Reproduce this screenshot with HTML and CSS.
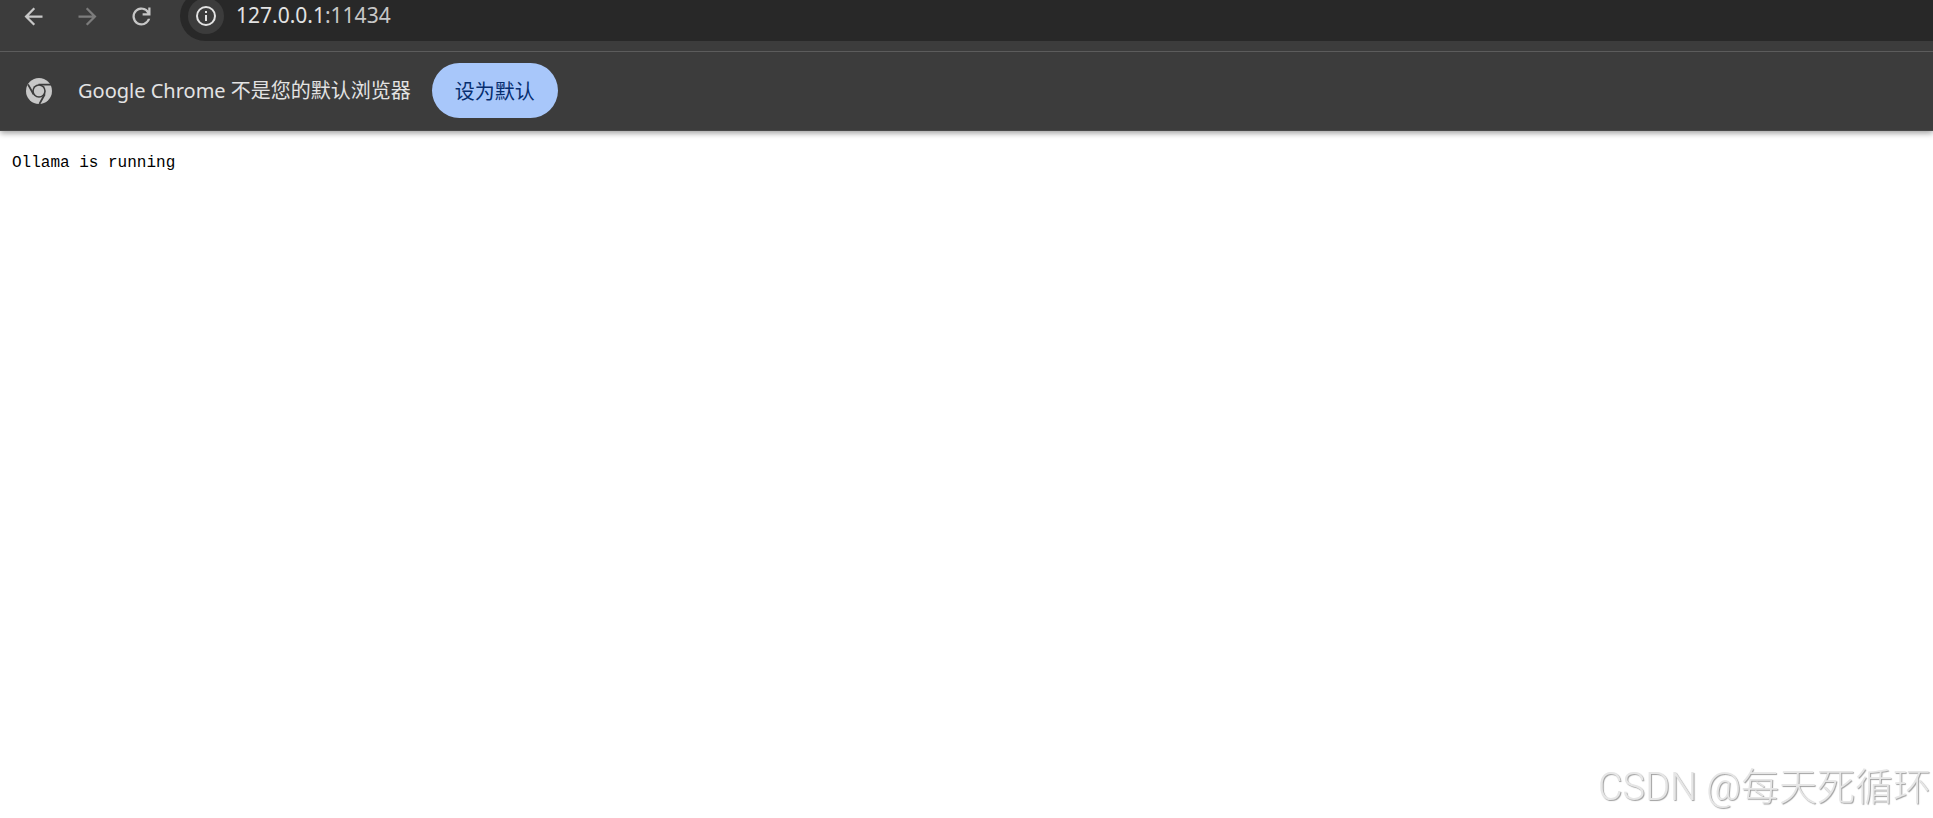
FILE: index.html
```html
<!DOCTYPE html>
<html lang="zh-CN">
<head>
<meta charset="utf-8">
<title>127.0.0.1:11434</title>
<link rel="stylesheet" href="styles.css">
</head>
<body>
<header class="browser">
  <nav class="toolbar" aria-label="导航">
    <button class="tool" type="button" aria-label="后退">
      <svg viewBox="0 0 24 24"><path d="M20 11H7.83l5.59-5.59L12 4l-8 8 8 8 1.41-1.41L7.83 13H20z"/></svg>
    </button>
    <button class="tool tool-off" type="button" aria-label="前进" disabled>
      <svg viewBox="0 0 24 24"><path d="M4 11h12.17l-5.59-5.59L12 4l8 8-8 8-1.41-1.41L16.17 13H4z"/></svg>
    </button>
    <button class="tool" type="button" aria-label="重新加载">
      <svg viewBox="0 0 24 24"><path d="M12 20a8 8 0 1 1 6-13.25V4h2v7h-7V9h4.2A6 6 0 1 0 17.65 14h2.1A8 8 0 0 1 12 20z"/></svg>
    </button>
    <div class="address">
      <button class="site-info" type="button" aria-label="网站信息">
        <svg viewBox="0 0 24 24"><path d="M11 7h2v2h-2zm0 4h2v6h-2zm1-9a10 10 0 1 0 0 20 10 10 0 0 0 0-20zm0 18a8 8 0 1 1 0-16 8 8 0 0 1 0 16z"/></svg>
      </button>
      <div class="url" role="textbox" tabindex="0" aria-label="地址">127.0.0.1<span class="port">:11434</span></div>
    </div>
  </nav>
  <div class="infobar">
    <svg class="chrome-logo" viewBox="0 0 26 26" aria-hidden="true">
      <circle class="logo-fill" cx="13" cy="13" r="13"/>
      <circle class="logo-gap" cx="13" cy="13" r="6.8"/>
      <path class="logo-line" d="M12.5 6.7H25M18.8 16.2 13.4 26M7.5 16.2 2 6.4"/>
      <circle class="logo-fill" cx="13" cy="13" r="5.2"/>
    </svg>
    <p class="message">Google Chrome 不是您的默认浏览器</p>
    <button class="default-button" type="button">设为默认</button>
  </div>
</header>
<main class="page">
  <pre class="output">Ollama is running</pre>
</main>
<div class="watermark">CSDN @每天死循环</div>
</body>
</html>
```
FILE: styles.css
```css
* {
  box-sizing: border-box;
}

body {
  margin: 0;
  background: #fff;
  color: #000;
  font-family: "Noto Sans", "Noto Sans CJK SC", sans-serif;
}

button {
  border: 0;
  padding: 0;
  font: inherit;
}

.browser {
  background: #3c3c3c;
  color: #e3e3e3;
  border-bottom: 1px solid #474747;
  box-shadow: 0 2px 6px rgba(0, 0, 0, 0.4);
}

.toolbar {
  display: flex;
  align-items: flex-start;
  height: 52px;
  padding-left: 6px;
  overflow: hidden;
  border-bottom: 1px solid #5c5c5c;
}

.tool {
  display: grid;
  place-items: center;
  width: 54px;
  height: 32px;
  background: none;
  color: #c7c7c7;
}

.tool-off {
  color: #7c7c7c;
}

.tool svg {
  width: 27px;
  height: 27px;
  fill: currentColor;
}

.address {
  display: flex;
  flex: 1;
  align-items: center;
  gap: 12px;
  height: 50px;
  margin: -9px 0 0 12px;
  padding-left: 8px;
  border-radius: 25px 0 0 25px;
  background: #282828;
}

.site-info {
  display: grid;
  place-items: center;
  width: 36px;
  height: 36px;
  border-radius: 50%;
  background: #3c3c3c;
  color: #e3e3e3;
}

.site-info svg {
  width: 24px;
  height: 24px;
  fill: currentColor;
}

.url {
  padding-bottom: 2px;
  font-size: 21px;
  line-height: 28px;
}

.port {
  color: #c7c7c7;
}

.infobar {
  display: flex;
  align-items: center;
  height: 78px;
  padding: 0 26px 1px;
}

.chrome-logo {
  width: 26px;
  height: 26px;
}

.logo-fill {
  fill: #c7c7c7;
}

.logo-gap {
  fill: #3c3c3c;
}

.logo-line {
  fill: none;
  stroke: #3c3c3c;
  stroke-width: 1.8;
}

.message {
  margin: 0 21px 0 26px;
  font-size: 20px;
  line-height: 28px;
}

.default-button {
  height: 55px;
  padding: 0 23px;
  border-radius: 28px;
  background: #a8c7fa;
  color: #062e6f;
  font-size: 20px;
}

.page {
  padding: 20px 12px;
}

.output {
  margin: 0;
  font-family: "Liberation Mono", monospace;
  font-size: 16px;
  line-height: 24px;
}

.watermark {
  position: fixed;
  right: 2px;
  bottom: 3px;
  color: #e6e6e6;
  font-family: Roboto, "Noto Sans CJK SC", sans-serif;
  font-size: 38px;
  font-weight: 300;
  line-height: 56px;
  text-shadow: 1px 1px 1px #a0a0a0;
}
```
